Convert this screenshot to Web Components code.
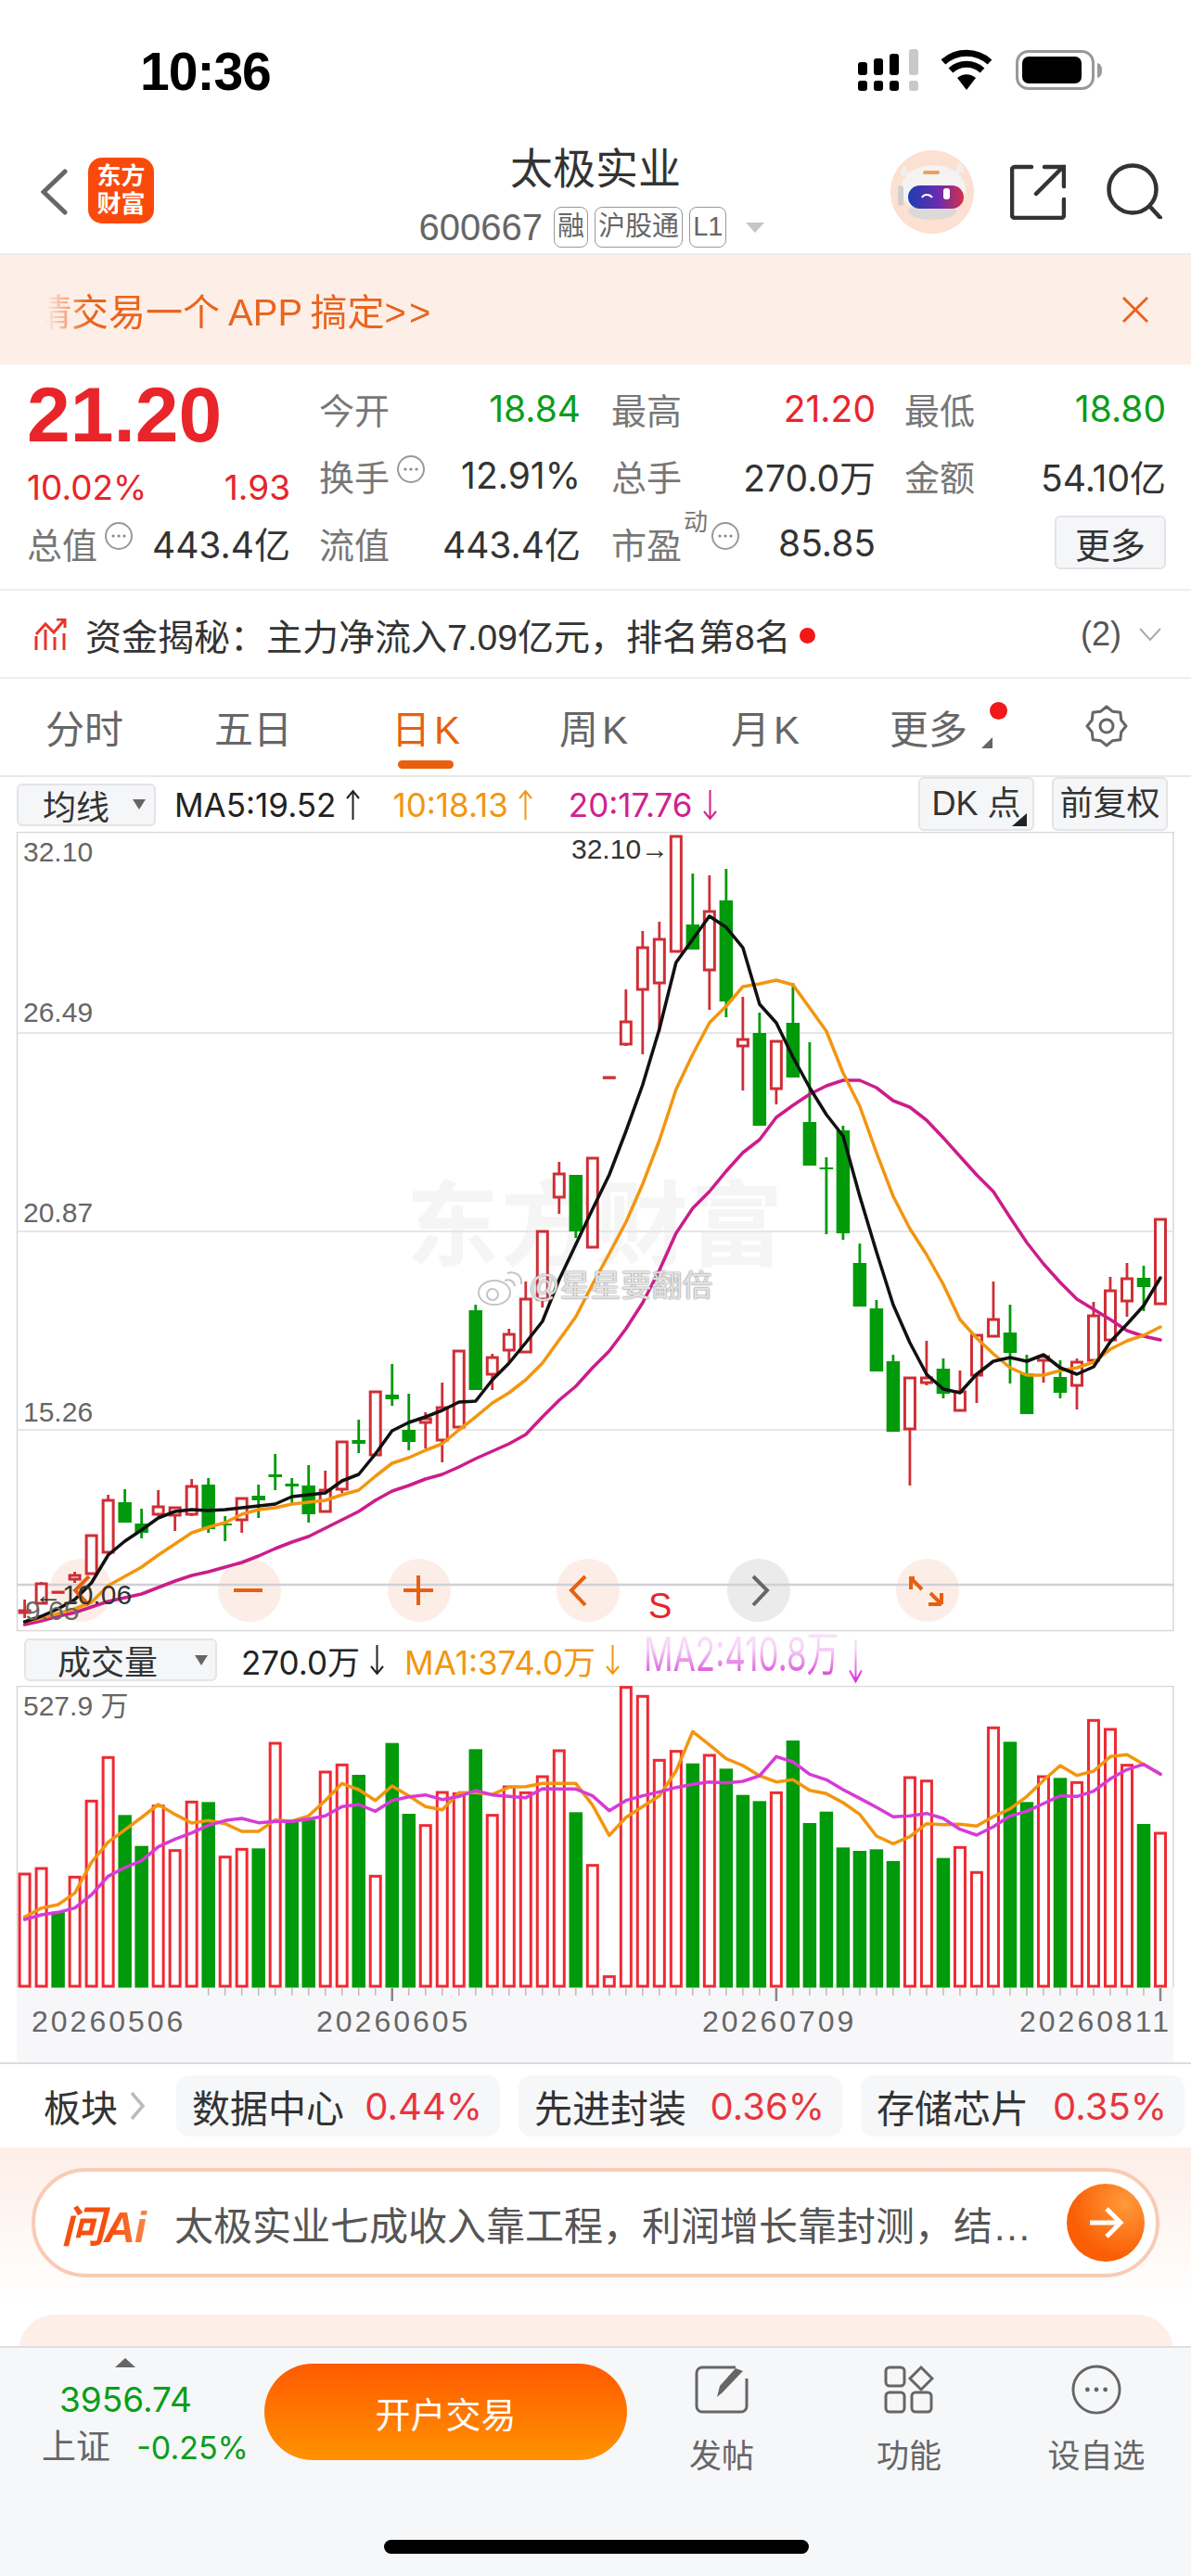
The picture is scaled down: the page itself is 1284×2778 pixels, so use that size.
<!DOCTYPE html>
<html lang="zh">
<head>
<meta charset="utf-8">
<title>太极实业</title>
<style>
  html, body { margin: 0; padding: 0; background: #fff; }
  body {
    width: 1284px;
    font-family: "Liberation Sans", "Noto Sans CJK SC", sans-serif;
    color: #333;
  }
  kline-chart, volume-chart { display: block; }
</style>
</head>
<body>
<status-bar></status-bar>
<stock-header></stock-header>
<promo-banner></promo-banner>
<quote-panel></quote-panel>
<capital-row></capital-row>
<period-tabs></period-tabs>
<kline-toolbar></kline-toolbar>
<kline-chart></kline-chart>
<volume-toolbar></volume-toolbar>
<volume-chart></volume-chart>
<sector-strip></sector-strip>
<ai-section></ai-section>
<bottom-nav></bottom-nav>

<script>
const RED = "#e8252a";
const GREEN = "#0a9e1a";
const ORANGE = "#f2960f";
// the app's figures have a narrow 1, Inter is the closest installed
const DIGITS = `Inter, "Noto Sans CJK SC", sans-serif`;

class Base extends HTMLElement {
    constructor() {
        super();
        this.attachShadow({ mode: "open" });
    }
    connectedCallback() {
        this.shadowRoot.innerHTML = `<style>${this.styles()}</style>${this.markup()}`;
    }
}

const infoDot = () => `
    <svg class="dot" width="32" height="32" viewBox="0 0 32 32">
        <circle cx="16" cy="16" r="14" fill="none" stroke="#999" stroke-width="2"/>
        <circle cx="10" cy="16" r="1.6" fill="#888"/><circle cx="16" cy="16" r="1.6" fill="#888"/><circle cx="22" cy="16" r="1.6" fill="#888"/>
    </svg>`;

const arrow = (dir, color) => `
    <svg class="arrow" width="19" height="34" viewBox="0 0 19 34">
        <path d="${dir === "up" ? "M9.5 33V2M3 10l6.5-8 6.5 8" : "M9.5 1v31M3 24l6.5 8 6.5-8"}" fill="none" stroke="${color}" stroke-width="2"/>
    </svg>`;

class StatusBar extends Base {
    styles() {
        return `
            :host { display: flex; height: 150px; box-sizing: border-box; padding: 46px 96px 0 151px; justify-content: space-between; align-items: flex-start; }
            .time { font-size: 57px; font-weight: 700; line-height: 62px; color: #000; letter-spacing: -1px; }
            svg { margin-top: 7px; display: block; }
        `;
    }
    markup() {
        return `
            <div class="time">10:36</div>
            <svg width="263" height="46" viewBox="925 53 263 46">
                <g fill="#000">
                    <rect x="925" y="67" width="10" height="14" rx="3"/><rect x="942" y="63" width="10" height="18" rx="3"/><rect x="959" y="58" width="10" height="23" rx="3"/>
                    <rect x="925" y="87" width="10" height="11" rx="3"/><rect x="942" y="87" width="10" height="11" rx="3"/><rect x="959" y="87" width="10" height="11" rx="3"/>
                </g>
                <g fill="#c9c9c9"><rect x="980" y="53" width="10" height="28" rx="3"/><rect x="980" y="87" width="10" height="11" rx="3"/></g>
                <path d="M1017 67a37 37 0 0 1 50 0M1025 76a25 25 0 0 1 34 0" fill="none" stroke="#000" stroke-width="7"/>
                <path d="M1032 84a15 15 0 0 1 20 0L1042 97z" fill="#000"/>
                <rect x="1096.5" y="55.5" width="82" height="40" rx="12" fill="none" stroke="#999" stroke-width="3"/>
                <rect x="1102" y="61" width="64" height="29" rx="7" fill="#000"/>
                <path d="M1183 68c4 1 5 4 5 8s-1 7-5 8z" fill="#999"/>
            </svg>
        `;
    }
}

class StockHeader extends Base {
    styles() {
        return `
            :host { display: grid; grid-template-columns: 1fr auto 1fr; height: 123px; box-sizing: border-box; }
            .left { display: flex; align-items: flex-start; padding: 20px 0 0 44px; gap: 22px; }
            .back { margin-top: 12px; }
            .logo { width: 71px; height: 71px; border-radius: 15px; background: #f94a0b; color: #fff; font-size: 26px; line-height: 30px; font-weight: 700; text-align: center; padding-top: 5px; box-sizing: border-box; }
            .mid { display: flex; flex-direction: column; align-items: center; padding-top: 8px; }
            h1 { margin: 0; font-size: 46px; line-height: 48px; font-weight: 400; color: #333; }
            .sub { display: flex; align-items: center; gap: 7px; margin: 17px 8px 0 0; height: 44px; font-size: 40px; color: #666; }
            .code { margin-right: 5px; }
            .tag { height: 44px; box-sizing: border-box; border: 1.5px solid #999; border-radius: 8px; font-size: 29px; line-height: 41px; padding: 0 3px; color: #666; }
            .tri { width: 0; height: 0; border: 10px solid transparent; border-top: 11px solid #c6c6c6; border-bottom: 0; margin-left: 14px; }
            .right { display: flex; justify-content: flex-end; align-items: flex-start; padding: 12px 31px 0 0; }
            .share { margin: 15px 44px 0 39px; }
            .search { margin-top: 14px; }
        `;
    }
    markup() {
        return `
            <div class="left">
                <svg class="back" width="29" height="50" viewBox="0 0 29 50"><path d="M26 3L3 25l23 22" fill="none" stroke="#666" stroke-width="5" stroke-linecap="round"/></svg>
                <div class="logo">东方<br>财富</div>
            </div>
            <div class="mid">
                <h1>太极实业</h1>
                <div class="sub">
                    <span class="code">600667</span>
                    <span class="tag">融</span><span class="tag">沪股通</span><span class="tag">L1</span>
                    <span class="tri"></span>
                </div>
            </div>
            <div class="right">
                <svg width="90" height="90" viewBox="0 0 90 90">
                    <defs>
                        <linearGradient id="visor"><stop offset="0" stop-color="#1d3fb0"/><stop offset=".55" stop-color="#6a2bb0"/><stop offset="1" stop-color="#d6304a"/></linearGradient>
                    </defs>
                    <circle cx="45" cy="45" r="45" fill="#fce0d1"/>
                    <path d="M11 28c0-6 2-10 4-12l6 10zM79 24c0-6-2-9-4-11l-7 12z" fill="#f1efee"/>
                    <ellipse cx="46" cy="42" rx="35" ry="26" fill="#f4f3f2"/>
                    <rect x="8" y="38" width="6" height="22" rx="3" fill="#d2d0cf"/>
                    <ellipse cx="45" cy="66" rx="26" ry="9" fill="#dcdad9"/>
                    <rect x="35" y="22" width="18" height="4" rx="2" fill="#eba25c"/>
                    <rect x="19" y="38" width="60" height="25" rx="12.500" fill="url(#visor)"/>
                    <path d="M34 51c2-4 8-4 11 0" fill="none" stroke="#fff" stroke-width="2"/>
                    <rect x="57" y="41" width="7" height="12" rx="3" fill="#fff"/>
                </svg>
                <svg class="share" width="60" height="60" viewBox="0 0 60 60"><path d="M23 3H5a3 3 0 0 0-3 3v49a3 3 0 0 0 3 3h50a3 3 0 0 0 3-3V38M28 32L57 3M37 3h21v21" fill="none" stroke="#333" stroke-width="4.500" stroke-linecap="round"/></svg>
                <svg class="search" width="60" height="60" viewBox="0 0 60 60"><circle cx="28" cy="28" r="25.500" fill="none" stroke="#333" stroke-width="4.500"/><path d="M47 47l11 12" stroke="#333" stroke-width="4.500" stroke-linecap="round"/></svg>
            </div>
        `;
    }
}

class PromoBanner extends Base {
    styles() {
        return `
            :host { display: flex; height: 120px; background: #fdeee7; padding: 0 45px 0 49px; justify-content: space-between; align-items: center; color: #e8651e; font-size: 40px; border-top: 2px solid #f2ebe7; box-sizing: border-box; }
            .clip { overflow: hidden; white-space: nowrap; width: 440px; -webkit-mask-image: linear-gradient(to right, transparent 0, #000 46px); mask-image: linear-gradient(to right, transparent 0, #000 46px); }
            .clip span { display: block; margin-left: -12px; word-spacing: -2px; }
            .clip i { font-style: normal; letter-spacing: 3px; }
        `;
    }
    markup() {
        return `
            <div class="clip"><span>请交易一个 APP 搞定<i>>></i></span></div>
            <svg width="30" height="30" viewBox="0 0 30 30"><path d="M2 2l26 26M28 2L2 28" stroke="#e8651e" stroke-width="3" fill="none"/></svg>
        `;
    }
}

class QuotePanel extends Base {
    styles() {
        return `
            :host { display: grid; height: 244px; box-sizing: border-box; padding: 11px 27px 0 29px; border-bottom: 2px solid #eee; grid-template-columns: 284px 284px 285px 282px; grid-template-rows: 72px 73px 72px; column-gap: 31px; font-family: ${DIGITS}; font-size: 39px; color: #333; }
            .cell { display: flex; justify-content: space-between; align-items: center; white-space: nowrap; }
            .cell:nth-child(4n+3) { padding-right: 2px; }
            .lab { color: #777; display: flex; align-items: center; font-size: 38px; }
            .dot { margin: -14px 0 0 7px; }
            sup { font-size: 26px; line-height: 26px; align-self: flex-start; margin: -8px 0 0 2px; }
            sup + .dot { margin-left: 3px; }
            .price { font-family: "Liberation Sans", sans-serif; font-size: 84px; line-height: 72px; font-weight: 700; color: ${RED}; padding-top: 7px; }
            .chg { color: ${RED}; padding-top: 26px; font-size: 37px; }
            .r { color: ${RED}; } .g { color: ${GREEN}; }
            button { font: inherit; font-size: 38px; color: #333; width: 120px; height: 58px; padding: 0; background: #f5f6f8; border: 2px solid #e4e4e8; border-radius: 6px; }
            .end { justify-content: flex-end; }
        `;
    }
    markup() {
        const cell = (lab, val, cls = "") => `<div class="cell"><span class="lab">${lab}</span><span class="${cls}">${val}</span></div>`;
        return `
            <div class="price">21.20</div>
            ${cell("今开", "18.84", "g")}
            ${cell("最高", "21.20", "r")}
            ${cell("最低", "18.80", "g")}
            <div class="cell chg"><span>10.02%</span><span>1.93</span></div>
            ${cell("换手" + infoDot(), "12.91%")}
            ${cell("总手", "270.0万")}
            ${cell("金额", "54.10亿")}
            ${cell("总值" + infoDot(), "443.4亿")}
            ${cell("流值", "443.4亿")}
            ${cell("市盈<sup>动</sup>" + infoDot(), "85.85")}
            <div class="cell end"><button>更多</button></div>
        `;
    }
}

class CapitalRow extends Base {
    styles() {
        return `
            :host { display: flex; height: 95px; box-sizing: border-box; padding: 0 31px 0 37px; align-items: center; border-bottom: 2px solid #eee; font-size: 39px; color: #333; white-space: nowrap; }
            svg.ic { margin-right: 20px; }
            i { display: block; width: 17px; height: 17px; border-radius: 50%; background: #f01818; margin: 4px 0 0 9px; }
            .n { margin-left: auto; font-size: 36px; color: #555; }
            .chev { margin-left: 18px; }
        `;
    }
    markup() {
        return `
            <svg class="ic" width="35" height="34" viewBox="0 0 35 34">
                <path d="M2 17L12 6l9 9L32 2M24 1h9v9" fill="none" stroke="#e8352a" stroke-width="3"/>
                <path d="M2 19v15M12 12v22M22 20v14M32 16v18" stroke="#e8352a" stroke-width="3"/>
            </svg>
            <span>资金揭秘：主力净流入7.09亿元，排名第8名</span><i></i>
            <span class="n">(2)</span>
            <svg class="chev" width="26" height="14" viewBox="0 0 26 14"><path d="M2 1l11 12L24 1" fill="none" stroke="#aaa" stroke-width="2"/></svg>
        `;
    }
}

class PeriodTabs extends Base {
    styles() {
        return `
            :host { display: grid; height: 106px; box-sizing: border-box; grid-template-columns: 182px 182px 194px 168px 202px 146px 210px; border-bottom: 2px solid #e8e8e8; font-size: 42px; color: #666; }
            div { display: flex; justify-content: center; align-items: center; position: relative; padding-bottom: 2px; }
            .k { letter-spacing: 4px; }
            .on { color: #e8600e; }
            .on::after { content: ""; position: absolute; left: 65px; top: 88px; width: 60px; height: 9px; border-radius: 5px; background: #e8600e; }
            .more::before { content: ""; position: absolute; left: 130px; top: 63px; border-left: 12px solid transparent; border-bottom: 12px solid #666; }
            .more::after { content: ""; position: absolute; left: 139px; top: 25px; width: 19px; height: 19px; border-radius: 50%; background: #f01818; }
            .gear { padding-left: 28px; }
        `;
    }
    markup() {
        return `
            <div>分时</div><div>五日</div><div class="on k">日K</div><div class="k">周K</div><div class="k">月K</div>
            <div class="more">更多</div>
            <div class="gear">
                <svg width="46" height="46" viewBox="0 0 46 46" fill="none" stroke="#666" stroke-width="3" stroke-linejoin="round">
                    <path d="M23 2l6.5 5.3 8.3.9.9 8.3L44 23l-5.3 6.5-.9 8.3-8.3.9L23 44l-6.5-5.3-8.3-.9-.9-8.3L2 23l5.300-6.500.9-8.300 8.300-.9z"/>
                    <circle cx="23" cy="23" r="7"/>
                </svg>
            </div>
        `;
    }
}

// shared bits of the two chart toolbars
const toolbarStyles = `
    .sel { display: flex; align-items: center; justify-content: space-between; box-sizing: border-box; height: 46px; background: #f5f6f8; border: 2px solid #e4e4e8; border-radius: 6px; color: #333; flex: none; font-family: "Liberation Sans", "Noto Sans CJK SC", sans-serif; font-size: 36px; }
    .sel i { border: 7px solid transparent; border-top: 11px solid #666; border-bottom: 0; }
    .v { display: inline-flex; align-items: center; gap: 9px; white-space: nowrap; }
    .arrow { display: block; }
`;

class KlineToolbar extends Base {
    styles() {
        return `
            :host { display: flex; height: 59px; box-sizing: border-box; padding: 0 25px 0 18px; font-family: ${DIGITS}; font-size: 35px; color: #222; align-items: center; }
            ${toolbarStyles}
            .sel { width: 150px; padding: 0 9px 0 26px; margin-right: 20px; }
            .ma10 { color: ${ORANGE}; margin-left: 33px; }
            .ma20 { color: #d1208e; margin-left: 37px; }
            .btns { margin-left: auto; display: flex; gap: 19px; align-self: flex-start; }
            .btn { position: relative; box-sizing: border-box; width: 125px; height: 58px; background: #f5f6f8; border: 2px solid #e4e4e8; border-radius: 6px; text-align: center; line-height: 54px; color: #333; white-space: nowrap; font-family: "Liberation Sans", "Noto Sans CJK SC", sans-serif; font-size: 36px; }
            .btn.dk::after { content: ""; position: absolute; right: 6px; bottom: 3px; border-left: 16px solid transparent; border-bottom: 14px solid #222; }
        `;
    }
    markup() {
        return `
            <div class="sel"><span>均线</span><i></i></div>
            <span class="v">MA5:19.52${arrow("up", "#222")}</span>
            <span class="v ma10">10:18.13${arrow("up", ORANGE)}</span>
            <span class="v ma20">20:17.76${arrow("down", "#d1208e")}</span>
            <div class="btns"><div class="btn dk">DK 点</div><div class="btn">前复权</div></div>
        `;
    }
}

// [colour, wick top, body top, body bottom, wick bottom], page y, read off the screenshot
const CANDLES = [
    ["r",1725,1737,1739,1745],["r",1706,1708,1729,1730],["r",1717,1717,1717.3,1717.3],["r",1695,1699,1703,1707],
    ["r",1656,1656,1697,1697],["r",1612,1618,1674,1677],["g",1606,1620,1642,1642],["g",1627,1643,1653,1659],
    ["r",1607,1625,1633,1635],["r",1626,1626,1634,1651],["r",1595,1603,1633,1635],["g",1594,1601,1649,1653],
    ["g",1635,1643,1645,1662],["r",1616,1616,1639,1653],["g",1601,1613,1618,1637],["g",1568,1590,1593,1607],
    ["g",1594,1600,1603,1623],["g",1580,1602,1633,1642],["r",1586,1607,1630,1630],["r",1555,1555,1606,1610],
    ["g",1531,1553,1557,1567],["r",1501,1501,1569,1569],["g",1471,1504,1509,1516],["g",1503,1542,1555,1564],
    ["r",1523,1530,1534,1562],["r",1491,1518,1553,1577],["r",1457,1457,1539,1539],["g",1407,1413,1499,1499],
    ["r",1460,1464,1482,1499],["r",1433,1439,1456,1469],["r",1382,1401,1458,1458],["r",1328,1328,1401,1410],
    ["r",1253,1266,1291,1309],["g",1267,1267,1328,1335],["r",1249,1249,1345,1345],["r",1162,1162,1162.3,1162.3],
    ["r",1067,1102,1126,1128],["r",1004,1022,1067,1137],["r",994,1013,1060,1113],["r",902,902,1026,1026],
    ["g",942,997,1024,1024],["r",944,983,1046,1089],["g",937,971,1080,1097],["r",1075,1121,1128,1176],
    ["g",1092,1114,1214,1214],["r",1123,1123,1174,1191],["g",1060,1103,1162,1162],["g",1124,1210,1257,1257],
    ["g",1248,1259,1261,1331],["g",1214,1219,1330,1337],["g",1341,1362,1409,1409],["g",1402,1411,1479,1479],
    ["g",1461,1468,1544,1544],["r",1486,1486,1541,1602],["r",1446,1486,1491,1494],["g",1465,1476,1503,1508],
    ["r",1478,1501,1521,1521],["r",1440,1440,1483,1513],["r",1382,1423,1441,1441],["g",1407,1437,1459,1492],
    ["g",1461,1481,1525,1525],["r",1462,1463,1467,1491],["g",1467,1485,1502,1508],["r",1465,1469,1494,1520],
    ["r",1404,1419,1467,1467],["r",1377,1392,1445,1445],["r",1362,1379,1403,1420],["g",1365,1378,1388,1414],
    ["r",1315,1315,1406,1406]
];
const MA5 = [1749,1743,1735,1725,1707,1677,1662,1650,1637,1630,1628,1629,1628,1626,1624,1622,1614,1612,1610,1597,1590,1568,1543,1534,1528,1521,1512,1511,1488,1470,1448,1425,1380,1342,1304,1267,1220,1170,1110,1038,1013,988,1000,1022,1083,1103,1140,1173,1202,1225,1290,1350,1407,1448,1482,1498,1502,1482,1468,1464,1468,1461,1475,1482,1474,1447,1428,1408,1378];
const MA10 = [1749,1745,1740,1735,1728,1710,1700,1690,1677,1665,1653,1647,1642,1633,1628,1626,1622,1620,1618,1612,1607,1592,1578,1572,1564,1557,1542,1528,1513,1502,1488,1470,1445,1420,1385,1352,1318,1277,1230,1175,1137,1103,1085,1064,1061,1057,1062,1087,1112,1157,1193,1243,1290,1325,1353,1385,1423,1443,1460,1475,1483,1483,1478,1475,1469,1455,1446,1440,1431];
const MA20 = [1752,1748,1743,1739,1733,1727,1723,1719,1712,1705,1699,1695,1690,1685,1678,1670,1663,1657,1648,1639,1630,1618,1608,1602,1595,1590,1582,1573,1565,1557,1547,1528,1510,1495,1475,1457,1433,1405,1370,1330,1303,1285,1263,1243,1229,1205,1192,1180,1171,1165,1165,1173,1187,1194,1208,1227,1247,1267,1285,1313,1340,1363,1383,1401,1412,1423,1435,1441,1445];

const cx = (i) => 26.6 + 18.006 * i;
const polyline = (ys, color, w = 3.5) => `<polyline points="${ys.map((y, i) => `${cx(i).toFixed(1)},${y}`).join(" ")}" fill="none" stroke="${color}" stroke-width="${w}" stroke-linejoin="round" stroke-linecap="round"/>`;

class KlineChart extends Base {
    styles() {
        return `
            :host { display: block; position: relative; height: 863px; overflow: hidden; }
            svg { display: block; }
            span { position: absolute; font-size: 30px; line-height: 34px; color: #666; white-space: nowrap; }
            .dark { color: #333; }
            .mark { font-size: 100px; line-height: 110px; left: 438px; top: 370px; font-weight: 700; color: #f5f5f5; letter-spacing: 2px; }
            .wb { left: 570px; top: 470px; font-size: 33px; line-height: 40px; color: rgba(255,255,255,.75); text-shadow: 0 0 2px #8a8a8a, 0 0 1px #8a8a8a; }
            .s { left: 699px; top: 815px; font-size: 38px; line-height: 40px; color: ${RED}; }
        `;
    }
    markup() {
        const candles = CANDLES.map(([c, wt, bt, bb, wb], i) => {
            const x = cx(i);
            const col = c === "r" ? "#cf2e36" : "#009a0a";
            const wick = `<path d="M${x} ${wt}V${wb}" stroke="${col}" stroke-width="2.8"/>`;
            return c === "r"
                ? wick + `<rect x="${x - 5.5}" y="${bt}" width="11" height="${bb - bt}" fill="#fff" stroke="${col}" stroke-width="3"/>`
                : wick + `<rect x="${x - 7.25}" y="${bt}" width="14.5" height="${bb - bt}" fill="${col}"/>`;
        }).join("");
        const circle = (x, fill = "#fceee7") => `<circle cx="${x}" cy="1715" r="34" fill="${fill}"/>`;
        const o = `fill="none" stroke="#e8600e" stroke-width="4"`;
        return `
            <span class="mark">东方财富</span>
            <svg width="1284" height="863" viewBox="0 897 1284 863" style="position:relative">
                <rect x="18.5" y="897.500" width="1246.500" height="861" fill="none" stroke="#d8d8d8" stroke-width="1.500"/>
                ${circle(87)}${circle(269)}${circle(452)}${circle(634)}${circle(818, "#ebebeb")}${circle(1000)}
                <g stroke="#e6e6e6" stroke-width="2"><path d="M19 1114H1265M19 1328H1265M19 1542H1265"/></g>
                <path d="M19 1709H1265" stroke="#d0d0d6" stroke-width="2.500"/>
                ${candles}
                ${polyline(MA20, "#cc1d8a")}
                ${polyline(MA10, ORANGE)}
                ${polyline(MA5, "#111")}
                <g fill="none" stroke="#c4c4c4" stroke-width="2">
                    <ellipse cx="533" cy="1394" rx="17" ry="13"/><circle cx="531" cy="1396" r="6"/>
                    <path d="M544 1381c5-2 10 0 11 6M547 1373c9-3 16 3 15 12"/>
                </g>
                <path ${o} d="M96 1700l-15 15 15 16M631 1700l-15 15 15 16"/>
                <path ${o} d="M252 1715H283M435 1715H467M451 1699V1731"/>
                <path d="M812 1700l15 15-15 16" fill="none" stroke="#666" stroke-width="4"/>
                <path ${o} d="M986 1702h-4v12M982 1702l12 12M1015 1730h-14M1015 1730v-12M1015 1730l-12-12"/>
            </svg>
            <span style="left:25px;top:5px">32.10</span>
            <span style="left:25px;top:178px">26.49</span>
            <span style="left:25px;top:394px">20.87</span>
            <span style="left:25px;top:609px">15.26</span>
            <span style="left:27px;top:823px">9.65</span>
            <span class="dark" style="left:616px;top:2px">32.10→</span>
            <span class="dark" style="left:37px;top:806px">←10.06</span>
            <span class="wb">@星星要翻倍</span>
            <span class="s">S</span>
        `;
    }
}

class VolumeToolbar extends Base {
    styles() {
        return `
            :host { display: flex; height: 58px; box-sizing: border-box; padding: 7px 0 5px 26px; font-family: ${DIGITS}; font-size: 35px; color: #222; align-items: center; white-space: nowrap; }
            ${toolbarStyles}
            .sel { width: 208px; padding: 0 8px 0 34px; margin-right: 26px; }
            .a1 { color: ${ORANGE}; margin-left: 20px; }
            .a2 { color: #d63bd6; margin-left: 24px; display: inline-flex; align-items: flex-end; gap: 8px; transform: scaleY(1.45); transform-origin: bottom; -webkit-mask-image: linear-gradient(to bottom, transparent 0, rgba(0,0,0,.25) 50%, #000 92%); mask-image: linear-gradient(to bottom, transparent 0, rgba(0,0,0,.25) 50%, #000 92%); }
        `;
    }
    markup() {
        return `
            <div class="sel"><span>成交量</span><i></i></div>
            <span class="v">270.0万${arrow("down", "#222")}</span>
            <span class="v a1">MA1:374.0万${arrow("down", ORANGE)}</span>
            <span class="a2"><span>MA2:410.8万</span>${arrow("down", "#d63bd6")}</span>
        `;
    }
}

// y values as read in the 3x crops: page y = 1760 + v / 3
const VOL = [
    ["r",783],["r",765],["g",905],["r",793],["r",547],["r",406],["g",592],["g",692],["r",563],["r",707],["r",550],["g",550],
    ["r",728],["r",703],["g",700],["r",360],["g",607],["g",607],["r",453],["r",430],["g",462],["r",790],["g",359],["g",588],
    ["r",626],["r",519],["r",523],["g",379],["r",593],["r",501],["r",520],["r",468],["r",384],["g",583],["r",755],["r",1115],
    ["r",179],["r",208],["r",415],["r",386],["g",425],["r",399],["g",442],["g",527],["g",547],["r",520],["g",351],["g",618],
    ["g",581],["g",697],["g",708],["g",703],["g",741],["r",471],["r",482],["g",731],["r",697],["r",778],["r",310],["g",355],
    ["g",550],["r",468],["g",472],["r",487],["r",286],["r",315],["r",431],["g",621],["r",651]
];
const VOL_MA1 = [922,893,882,845,745,680,640,600,558,590,618,610,620,645,645,608,612,595,545,490,510,545,498,530,565,575,520,520,525,502,500,490,490,490,560,658,600,565,530,450,322,365,410,432,465,485,478,512,523,552,590,660,685,662,620,623,622,628,597,572,532,480,432,464,450,403,397,428,460];
const VOL_MA2 = [930,915,907,893,850,790,762,740,695,670,650,625,610,603,617,613,613,605,595,565,558,580,545,533,527,542,532,513,527,532,536,507,508,508,530,578,545,530,517,503,493,485,488,483,465,403,420,460,478,510,538,567,598,595,587,603,638,657,630,595,580,555,530,532,515,475,445,428,460];

class VolumeChart extends Base {
    styles() {
        return `
            :host { display: block; position: relative; height: 408px; overflow: hidden; }
            svg { display: block; }
            span { position: absolute; font-size: 30px; line-height: 34px; color: #666; white-space: nowrap; }
            .d { font-size: 32px; letter-spacing: 3px; top: 344px; line-height: 36px; }
        `;
    }
    markup() {
        const py = (v) => 1760 + v / 3;
        const bars = VOL.map(([c, v], i) => {
            const x = cx(i);
            const y = py(v);
            return c === "r"
                ? `<rect x="${x - 5.5}" y="${y}" width="11" height="${2142 - y}" fill="#fff" stroke="#ee2a33" stroke-width="3"/>`
                : `<rect x="${x - 7.25}" y="${y}" width="14.500" height="${2143.5 - y}" fill="#009a0a"/>`;
        }).join("");
        let ticks = "";
        for (let i = 11; i < 69; i++) {
            const long = i === 22 || i === 45 || i === 68;
            ticks += `<path d="M${cx(i)} 2144V${long ? 2158 : 2152}" stroke="${long ? "#888" : "#bbb"}" stroke-width="${long ? 2.5 : 1.5}"/>`;
        }
        return `
            <svg width="1284" height="408" viewBox="0 1818 1284 408">
                <rect x="18" y="2143" width="1247" height="83" fill="#f7f7f9"/>
                <path d="M18.500 2143V1818.500H1265V2143" fill="none" stroke="#d8d8d8" stroke-width="1.500"/>
                ${bars}${ticks}
                ${polyline(VOL_MA1.map(py), ORANGE)}
                ${polyline(VOL_MA2.map(py), "#d63bd6")}
                <path d="M0 2225H1284" stroke="#dcdcdc" stroke-width="2"/>
            </svg>
            <span style="left:25px;top:5px">527.9 万</span>
            <span class="d" style="left:34px">20260506</span>
            <span class="d" style="left:341px">20260605</span>
            <span class="d" style="left:757px">20260709</span>
            <span class="d" style="left:1099px">20260811</span>
        `;
    }
}

class SectorStrip extends Base {
    styles() {
        return `
            :host { display: flex; height: 90px; box-sizing: border-box; padding: 0 0 0 47px; align-items: center; font-size: 41px; color: #333; white-space: nowrap; overflow: hidden; }
            .t { display: flex; align-items: center; gap: 12px; width: 143px; flex: none; font-size: 40px; }
            .chip { flex: none; box-sizing: border-box; width: 349px; height: 66px; background: #f6f7f9; border-radius: 14px; padding: 0 19px 0 17px; display: flex; justify-content: space-between; align-items: center; margin-right: 20px; }
            b { font-family: Inter, sans-serif; font-size: 40px; font-weight: 400; color: #e8353e; }
        `;
    }
    markup() {
        const chip = (n, p) => `<div class="chip"><span>${n}</span><b>${p}</b></div>`;
        return `
            <div class="t">板块<svg width="18" height="32" viewBox="0 0 18 32"><path d="M3 2l12 14L3 30" fill="none" stroke="#bbb" stroke-width="3.500"/></svg></div>
            ${chip("数据中心", "0.44%")}${chip("先进封装", "0.36%")}${chip("存储芯片", "0.35%")}
        `;
    }
}

class AiSection extends Base {
    styles() {
        return `
            :host { display: block; height: 214px; box-sizing: border-box; padding-top: 22px; overflow: hidden; background: linear-gradient(#fdeee7, #fff 78%); }
            .bar { margin-left: 34px; width: 1216px; height: 118px; box-sizing: border-box; border: 4px solid #f9cbb5; border-radius: 59px; background: #fff; display: flex; align-items: center; padding: 0 12px 0 28px; font-size: 42px; color: #555; white-space: nowrap; }
            .logo { font-size: 47px; font-weight: 700; font-style: italic; margin-right: 24px; background: linear-gradient(90deg, #f4500f 55%, #f98d50); -webkit-background-clip: text; background-clip: text; color: transparent; width: 98px; flex: none; letter-spacing: -1px; }
            .go { margin-left: auto; width: 84px; height: 84px; border-radius: 50%; background: radial-gradient(circle at 75% 25%, #ff9a3a, #fb5f06 65%); display: flex; justify-content: center; align-items: center; flex: none; }
            .card { margin: 40px 19px 0 20px; height: 60px; border-radius: 40px 40px 0 0; background: #fdeee7; }
        `;
    }
    markup() {
        return `
            <div class="bar">
                <span class="logo">问Ai</span>
                <span>太极实业七成收入靠工程，利润增长靠封测，结…</span>
                <div class="go"><svg width="40" height="40" viewBox="0 0 40 40"><path d="M3 20h32M21 5l15 15-15 15" fill="none" stroke="#fff" stroke-width="5"/></svg></div>
            </div>
            <div class="card"></div>
        `;
    }
}

class BottomNav extends Base {
    styles() {
        return `
            :host { display: block; height: 248px; box-sizing: border-box; background: #f6f7f9; border-top: 2px solid #dfdfdf; color: #666; }
            .row { display: flex; height: 207px; padding-left: 45px; }
            .idx { width: 223px; flex: none; margin-right: 17px; }
            .tri { width: 0; height: 0; border: 11px solid transparent; border-bottom: 10px solid #666; border-top: 0; margin: 11px 0 0 79px; }
            .val { font-family: Inter, sans-serif; color: ${GREEN}; font-size: 37px; line-height: 44px; margin: 13px 0 0 19px; }
            .sub { display: flex; justify-content: space-between; align-items: center; font-size: 37px; line-height: 44px; margin-top: 8px; }
            .sub b { font-family: Inter, sans-serif; font-size: 34px; font-weight: 400; color: ${GREEN}; }
            .cta { width: 391px; height: 104px; margin-top: 17px; flex: none; border-radius: 52px; background: linear-gradient(#ff5a00, #ff9200); color: #fff; font-size: 38px; display: flex; justify-content: center; align-items: center; }
            .item { width: 202px; flex: none; display: flex; flex-direction: column; align-items: center; font-size: 35px; padding-top: 18px; box-sizing: border-box; }
            .item svg { display: block; height: 54px; margin-bottom: 16px; }
            .item:nth-of-type(3) { margin-left: 1px; }
            .home { width: 458px; height: 15px; border-radius: 8px; background: #000; margin: 0 0 0 414px; }
        `;
    }
    markup() {
        const s = `fill="none" stroke="#666" stroke-width="3"`;
        return `
            <div class="row">
                <div class="idx">
                    <div class="tri"></div>
                    <div class="val">3956.74</div>
                    <div class="sub"><span>上证</span><b>-0.25%</b></div>
                </div>
                <div class="cta">开户交易</div>
                <div class="item">
                    <svg width="58" height="54" viewBox="0 0 58 52"><path ${s} d="M44 2H8a6 6 0 0 0-6 6v36a6 6 0 0 0 6 6h42a6 6 0 0 0 6-6V14"/><path d="M24 34l3-12L44 3l8 3-3 3-19 20z" fill="#666"/></svg>
                    发帖
                </div>
                <div class="item">
                    <svg width="54" height="54" viewBox="0 0 54 52"><g ${s}><rect x="2" y="2" width="20" height="20" rx="4"/><path d="M40 2l12 12-12 12-12-12z"/><rect x="2" y="29" width="20" height="21" rx="4"/><rect x="30" y="29" width="21" height="21" rx="4"/></g></svg>
                    功能
                </div>
                <div class="item">
                    <svg width="56" height="54" viewBox="0 0 56 56"><circle cx="28" cy="28" r="26" ${s}/><circle cx="18" cy="28" r="2.500" fill="#666"/><circle cx="28" cy="28" r="2.500" fill="#666"/><circle cx="38" cy="28" r="2.500" fill="#666"/></svg>
                    设自选
                </div>
            </div>
            <div class="home"></div>
        `;
    }
}

customElements.define("status-bar", StatusBar);
customElements.define("stock-header", StockHeader);
customElements.define("promo-banner", PromoBanner);
customElements.define("quote-panel", QuotePanel);
customElements.define("capital-row", CapitalRow);
customElements.define("period-tabs", PeriodTabs);
customElements.define("kline-toolbar", KlineToolbar);
customElements.define("kline-chart", KlineChart);
customElements.define("volume-toolbar", VolumeToolbar);
customElements.define("volume-chart", VolumeChart);
customElements.define("sector-strip", SectorStrip);
customElements.define("ai-section", AiSection);
customElements.define("bottom-nav", BottomNav);
</script>
</body>
</html>
